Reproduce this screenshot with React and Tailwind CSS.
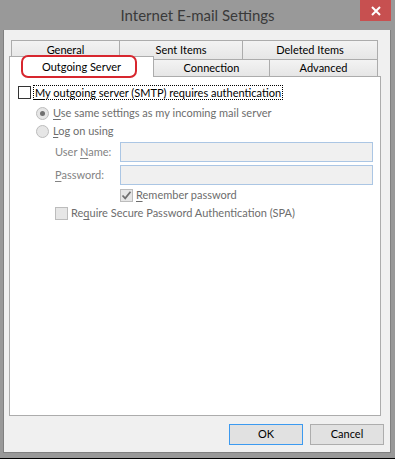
import React from "react";

const font = { fontFamily: 'Lato, "Noto Sans", "Liberation Sans", sans-serif' };

const Tab = ({ w, label, first }) => (
  <div
    className={`h-full ${w} flex items-center justify-center border-t border-r border-[#acacac] bg-gradient-to-b from-[#f3f3f3] to-[#e6e6e6] text-[11px] text-black ${
      first ? "border-l" : ""
    }`}
  >
    {label}
  </div>
);

const Check = ({ checked, disabled }) => (
  <div
    className={`w-[13px] h-[13px] shrink-0 border flex items-center justify-center ${
      disabled ? "border-[#bcbcbc] bg-[#e6e6e6]" : "border-[#333333] bg-white"
    }`}
  >
    {checked && (
      <svg width="11" height="11" viewBox="0 0 11 11">
        <path d="M1.5 5.5 L4.2 8.3 L9.5 1.8" fill="none" stroke="#707070" strokeWidth="1.8" />
      </svg>
    )}
  </div>
);

const Radio = ({ checked }) => (
  <div className="w-[13px] h-[13px] shrink-0 rounded-full border border-[#bcbcbc] bg-[#e6e6e6] flex items-center justify-center">
    {checked && <div className="w-[5px] h-[5px] rounded-full bg-[#707070]" />}
  </div>
);

const U = ({ children }) => <span className="underline underline-offset-2">{children}</span>;

export default function App() {
  return (
    <div className="w-[395px] h-[459px] bg-[#999999] border-b border-black flex flex-col select-none whitespace-nowrap" style={font}>
      {/* TITLE BAR */}
      <div className="h-[30px] relative flex items-center justify-center shrink-0">
        <span className="text-[15px] text-[#3a3a3a]">Internet E-mail Settings</span>
        <div className="absolute right-[4px] top-0 w-[31px] h-[21px] bg-[#c75050] flex items-center justify-center">
          <svg width="10" height="10" viewBox="0 0 10 10">
            <path d="M1 1 L9 9 M9 1 L1 9" stroke="white" strokeWidth="2" />
          </svg>
        </div>
      </div>

      {/* CLIENT */}
      <div className="ml-[3px] mr-[4px] h-[423px] shrink-0 bg-[#f0f0f0] border-l border-r border-b border-[#808080] pt-[10px] pl-[5px] flex flex-col">
        {/* tabs back row */}
        <div className="h-[19px] ml-[2px] flex">
          <Tab w="w-[109px]" label="General" first />
          <Tab w="w-[123px]" label="Sent Items" />
          <Tab w="w-[135px]" label="Deleted Items" />
        </div>
        {/* tabs front row */}
        <div className="h-[17px] flex items-end">
          <div className="relative z-10 w-[145px] h-[21px] mb-[-1px] border-t border-l border-r border-[#acacac] bg-white flex items-center justify-center text-[11px] text-black">
            <div className="absolute left-[11px] top-[-2px] w-[116px] h-[23px] rounded-[7px] border-2 border-[#d7262e]" />
            Outgoing Server
          </div>
          <div className="w-[116px] h-full">
            <Tab w="w-full" label="Connection" />
          </div>
          <div className="w-[108px] h-full">
            <Tab w="w-full" label="Advanced" />
          </div>
        </div>

        {/* PANEL */}
        <div className="w-[372px] h-[340px] border border-[#acacac] bg-white flex flex-col text-[11px]">
          <div className="h-[15px] mt-[8px] pl-[8px] flex items-center">
            <Check />
            <span className="ml-[2px] px-[1px] leading-[13px] border border-dotted border-black text-black">
              <U>M</U>y outgoing server (SMTP) requires authentication
            </span>
          </div>

          <div className="h-[14px] mt-[6px] pl-[26px] flex items-center text-[#6d6d6d]">
            <Radio checked />
            <span className="ml-[4px]">
              <U>U</U>se same settings as my incoming mail server
            </span>
          </div>

          <div className="h-[15px] mt-[4px] pl-[26px] flex items-center text-[#6d6d6d]">
            <Radio />
            <span className="ml-[4px]">
              <U>L</U>og on using
            </span>
          </div>

          <div className="h-[20px] mt-[3px] pl-[45px] flex items-center text-[#838383]">
            <span className="w-[65px] shrink-0">
              User <U>N</U>ame:
            </span>
            <div className="w-[253px] h-full border border-[#abc6e4] bg-[#f0f0f0]" />
          </div>

          <div className="h-[20px] mt-[3px] pl-[45px] flex items-center text-[#838383]">
            <span className="w-[65px] shrink-0">
              <U>P</U>assword:
            </span>
            <div className="w-[253px] h-full border border-[#abc6e4] bg-[#f0f0f0]" />
          </div>

          <div className="h-[15px] mt-[3px] pl-[110px] flex items-center text-[#6d6d6d]">
            <Check checked disabled />
            <span className="ml-[3px]">
              <U>R</U>emember password
            </span>
          </div>

          <div className="h-[15px] mt-[3px] pl-[45px] flex items-center text-[#6d6d6d]">
            <Check disabled />
            <span className="ml-[3px]">
              Re<U>q</U>uire Secure Password Authentication (SPA)
            </span>
          </div>
        </div>

        {/* BUTTONS */}
        <div className="mt-[8px] h-[21px] flex justify-end gap-[7px] pr-[6px] text-[11px] text-black">
          <button className="w-[74px] h-full border border-[#3c9af0] bg-[#e1e1e1] flex items-center justify-center">
            OK
          </button>
          <button className="w-[74px] h-full border border-[#adadad] bg-[#e1e1e1] flex items-center justify-center">
            Cancel
          </button>
        </div>
      </div>
    </div>
  );
}
